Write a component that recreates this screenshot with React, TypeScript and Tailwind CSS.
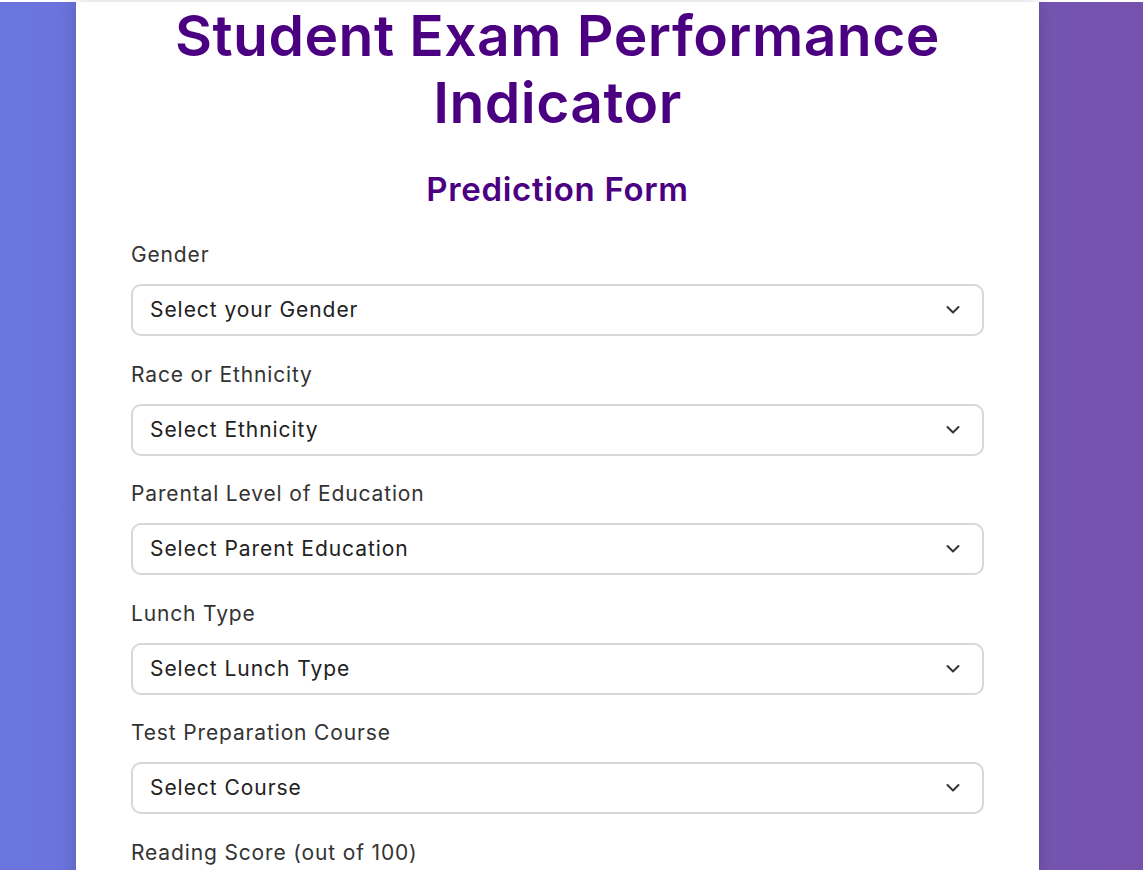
import { useState } from "react";

const fields = [
  { id: "gender", label: "Gender", placeholder: "Select your Gender", options: ["male", "female"] },
  {
    id: "ethnicity",
    label: "Race or Ethnicity",
    placeholder: "Select Ethnicity",
    options: ["group A", "group B", "group C", "group D", "group E"],
  },
  {
    id: "parental_level_of_education",
    label: "Parental Level of Education",
    placeholder: "Select Parent Education",
    options: ["associate's degree", "bachelor's degree", "high school", "master's degree", "some college", "some high school"],
  },
  { id: "lunch", label: "Lunch Type", placeholder: "Select Lunch Type", options: ["free/reduced", "standard"] },
  {
    id: "test_preparation_course",
    label: "Test Preparation Course",
    placeholder: "Select Course",
    options: ["none", "completed"],
  },
];

function Chevron() {
  return (
    <svg
      className="pointer-events-none absolute right-[24px] top-1/2 -translate-y-1/2"
      width="14"
      height="9"
      viewBox="0 0 14 9"
      fill="none"
    >
      <polyline points="1.5,1.5 7,7 12.5,1.5" stroke="#333" strokeWidth="2" strokeLinecap="round" strokeLinejoin="round" />
    </svg>
  );
}

function SelectField({ id, label, placeholder, options }: (typeof fields)[number]) {
  const [value, setValue] = useState("");

  return (
    <div className="mb-[23.5px]">
      <label htmlFor={id} className="block text-[21px] leading-[30px] tracking-[0.85px] text-[#333] mb-[14px]">
        {label}
      </label>
      <div className="relative">
        <select
          id={id}
          value={value}
          onChange={(e) => setValue(e.target.value)}
          className="appearance-none w-full h-[52px] rounded-[10px] border-2 border-[#d5d7db] bg-white pl-[17px] pr-12 text-[21px] tracking-[0.95px] text-[#222] outline-none"
        >
          <option value="" disabled>
            {placeholder}
          </option>
          {options.map((o) => (
            <option key={o} value={o}>
              {o}
            </option>
          ))}
        </select>
        <Chevron />
      </div>
    </div>
  );
}

function ScoreField({ id, label }: { id: string; label: string }) {
  return (
    <div className="mb-[23.5px]">
      <label htmlFor={id} className="block text-[21px] leading-[30px] tracking-[0.85px] text-[#333] mb-[14px]">
        {label}
      </label>
      <input
        id={id}
        type="number"
        min={0}
        max={100}
        placeholder="Enter your score"
        className="w-full h-[52px] rounded-[10px] border-2 border-[#d5d7db] bg-white px-[17px] text-[21px] text-[#222] outline-none"
      />
    </div>
  );
}

export default function App() {
  return (
    <div className="min-h-screen font-['Inter','Liberation_Sans',sans-serif]">
      <div className="h-[4px] bg-white border-b border-[#e2e2e2]" />
      <div className="bg-[linear-gradient(to_right,#6a76de,#7652ae)] pb-10">
        <div className="ml-[76px] w-[963px] bg-white px-[55px] pb-12 shadow-[0_0_18px_rgba(0,0,0,0.18)]">
          <h1 className="text-center text-[57px] leading-[67px] tracking-[0.45px] font-semibold text-[#4b0082] -mt-[2px]">
            Student Exam Performance Indicator
          </h1>
          <h2 className="text-center text-[33px] leading-[40px] tracking-[0.7px] font-semibold text-[#4b0082] mt-[33px] mb-[31px]">
            Prediction Form
          </h2>
          <form>
            {fields.map((f) => (
              <SelectField key={f.id} {...f} />
            ))}
            <ScoreField id="reading_score" label="Reading Score (out of 100)" />
            <ScoreField id="writing_score" label="Writing Score (out of 100)" />
            <button
              type="button"
              className="w-full h-[56px] rounded-[10px] bg-[#4b0082] text-white text-[21px] font-semibold"
            >
              Predict your Maths Score
            </button>
          </form>
        </div>
      </div>
    </div>
  );
}
